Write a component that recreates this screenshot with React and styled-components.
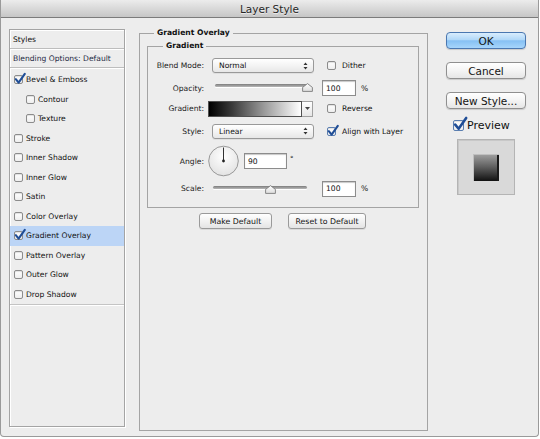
import React from 'react';
import styled, { createGlobalStyle } from 'styled-components';

const Global = createGlobalStyle`
  html, body { margin: 0; padding: 0; background: #ffffff; }
  body { font-family: "DejaVu Sans", "Liberation Sans", sans-serif; color: #111111; }
  * { box-sizing: border-box; }
`;

const Window = styled.div`
  width: 539px;
  height: 437px;
  background: #ededed;
  border: 1px solid #9a9a9a;
  border-top: none;
  border-radius: 0 0 4px 4px;
  display: flex;
  flex-direction: column;
`;

const TitleBar = styled.div`
  height: 18px;
  flex: none;
  background: linear-gradient(#ececec, #d9d9d9 50%, #c6c6c6);
  border-bottom: 1px solid #7b7b7b;
  display: flex;
  align-items: center;
  justify-content: center;
  font-size: 10.5px;
  color: #262626;
  text-shadow: 0 1px 0 rgba(255, 255, 255, 0.6);
`;

const Body = styled.div`
  display: flex;
  align-items: flex-start;
  padding-left: 8px;
`;

/* ---------- left list ---------- */
const StyleList = styled.div`
  margin-top: 11px;
  width: 116px;
  height: 398px;
  border: 1px solid #a4a4a4;
  box-shadow: inset 1px 1px 0 #ffffff, 1px 1px 0 #ffffff;
  display: flex;
  flex-direction: column;
`;

const HeadRow = styled.div`
  height: ${p => p.$h}px;
  flex: none;
  display: flex;
  align-items: center;
  padding-left: 3px;
  font-size: 7.6px;
  color: ${p => p.$c || '#111111'};
  border-bottom: 1px solid #bdbdbd;
  box-shadow: 0 1px 0 #ffffff;
`;

const Items = styled.div`
  padding-top: 2px;
  border-bottom: 1px solid #c4c4c4;
  box-shadow: 0 1px 0 #ffffff;
`;

const Item = styled.div`
  height: 19.5px;
  display: flex;
  align-items: center;
  gap: 3px;
  padding-left: ${p => (p.$indent ? 16 : 4)}px;
  font-size: 7.6px;
  background: ${p => (p.$sel ? '#bcd5f6' : 'transparent')};
`;

/* ---------- checkbox ---------- */
const Box = styled.span`
  position: relative;
  flex: none;
  width: ${p => p.$s}px;
  height: ${p => p.$s}px;
  border: 1px solid ${p => (p.$blue ? '#5a7eb0' : '#8c8c8c')};
  border-radius: 2px;
  background: linear-gradient(#ffffff, #eeeeee);
  box-shadow: inset 0 1px 1px rgba(0, 0, 0, 0.12);
`;

const Tick = styled.svg`
  position: absolute;
  left: ${p => p.$l}px;
  top: ${p => p.$t}px;
  overflow: visible;
`;

function Check({ checked, size = 9, blue }) {
  const k = size / 9;
  return (
    <Box $s={size} $blue={blue}>
      {checked && (
        <Tick $l={-1 * k} $t={-3 * k} width={12 * k} height={12 * k} viewBox="0 0 12 12">
          <path d="M1.8 6.2 L4.6 9.6 L10.8 0.8" fill="none" stroke="#1f4d96" strokeWidth="2.1" strokeLinecap="round" strokeLinejoin="round" />
        </Tick>
      )}
    </Box>
  );
}

/* ---------- middle ---------- */
const Field = styled.fieldset`
  margin: ${p => p.$m};
  padding: 0;
  min-inline-size: 0;
  border: 1px solid #a4a4a4;
  width: ${p => p.$w}px;
  height: ${p => p.$h}px;
  flex: none;
`;

const Legend = styled.legend`
  margin-left: ${p => p.$ml}px;
  padding: 0 3px;
  font-weight: bold;
  font-size: 7.6px;
  line-height: 10px;
  color: #111111;
`;

const Rows = styled.div`
  padding-top: 6px;
  display: flex;
  flex-direction: column;
`;

const Row = styled.div`
  display: grid;
  grid-template-columns: 56px 118px auto;
  align-items: center;
  height: ${p => p.$h}px;
  margin-top: ${p => p.$mt || 0}px;
`;

const Label = styled.span`
  text-align: right;
  font-size: 7.6px;
  color: #1a1a1a;
`;

const Cell = styled.div`
  display: flex;
  align-items: center;
  height: 100%;
  padding-left: ${p => p.$pl || 0}px;
`;

const Side = styled.div`
  display: flex;
  align-items: center;
  gap: ${p => p.$gap || 6}px;
  padding-left: ${p => p.$pl || 0}px;
  font-size: 7.6px;
`;

const Select = styled.div`
  width: 102px;
  height: 15px;
  border: 1px solid #999999;
  border-radius: 3px;
  background: linear-gradient(#ffffff, #f4f4f4 50%, #e7e7e7);
  box-shadow: 0 1px 0 rgba(0, 0, 0, 0.06);
  display: flex;
  align-items: center;
  justify-content: space-between;
  padding: 0 5px 0 6px;
  font-size: 7.6px;
`;

const Input = styled.input`
  width: ${p => p.$w}px;
  height: 16px;
  border: 1px solid #8c8c8c;
  box-shadow: inset 0 1px 1px rgba(0, 0, 0, 0.22);
  background: #ffffff;
  padding: 0 3px;
  font-family: inherit;
  font-size: 7.6px;
  color: #111111;
  outline: none;
`;

const SliderBox = styled.div`
  position: relative;
  align-self: flex-start;
  margin-top: ${p => p.$mt}px;
  width: ${p => p.$w}px;
  height: 11px;
`;

const Track = styled.div`
  height: 3px;
  border-radius: 2px;
  background: linear-gradient(#7c7c7c, #b9b9b9);
  box-shadow: 0 1px 0 #ffffff;
`;

const Thumb = styled.svg`
  position: absolute;
  top: -1px;
  margin-left: -5.5px;
`;

function Slider({ w, mt, pct }) {
  return (
    <SliderBox $w={w} $mt={mt}>
      <Track />
      <Thumb width="11" height="9" viewBox="0 0 11 9" style={{ left: `${pct}%` }}>
        <defs>
          <linearGradient id="tg" x1="0" y1="0" x2="0" y2="1">
            <stop offset="0" stopColor="#ffffff" />
            <stop offset="1" stopColor="#dcdcdc" />
          </linearGradient>
        </defs>
        <path d="M5.5 0.6 L10.4 4.4 L10.4 8.4 L0.6 8.4 L0.6 4.4 Z" fill="url(#tg)" stroke="#7a7a7a" strokeWidth="0.9" />
      </Thumb>
    </SliderBox>
  );
}

const Swatch = styled.div`
  width: 94px;
  height: 16px;
  border: 1px solid #505050;
  background: linear-gradient(90deg, #000000 0%, #3a3a3a 25%, #9a9a9a 60%, #ffffff 100%);
`;

const SwatchDrop = styled.div`
  width: 11px;
  height: 16px;
  border: 1px solid #a0a0a0;
  border-left: none;
  background: linear-gradient(#ffffff, #e6e6e6);
  display: flex;
  align-items: center;
  justify-content: center;
`;

const Degree = styled.span`
  align-self: flex-start;
  margin-top: 10px;
  margin-left: 3px;
  font-size: 7px;
`;

const ButtonsRow = styled.div`
  display: flex;
  justify-content: center;
  gap: 16px;
  margin-top: 5px;
  padding-right: 2px;
`;

const SmallBtn = styled.div`
  width: ${p => p.$w}px;
  height: 16px;
  border: 1px solid #9a9a9a;
  border-radius: 3px;
  background: linear-gradient(#ffffff, #f2f2f2 50%, #e4e4e4);
  box-shadow: 0 1px 0 rgba(0, 0, 0, 0.08);
  display: flex;
  align-items: center;
  justify-content: center;
  font-size: 7.8px;
  color: #111111;
`;

/* ---------- right column ---------- */
const RightCol = styled.div`
  margin-left: 18px;
  margin-top: 14px;
  width: 80px;
  display: flex;
  flex-direction: column;
`;

const Btn = styled.div`
  height: 17px;
  margin-top: ${p => p.$mt || 0}px;
  border-radius: 4px;
  border: 1px solid ${p => (p.$primary ? '#4a77b0' : '#8f8f8f')};
  background: ${p =>
    p.$primary
      ? 'linear-gradient(#d9edfd 0%, #b1d8f8 45%, #86c0f3 52%, #a6d5fb 100%)'
      : 'linear-gradient(#ffffff, #f4f4f4 50%, #e6e6e6)'};
  box-shadow: 0 1px 1px rgba(0, 0, 0, 0.15);
  display: flex;
  align-items: center;
  justify-content: center;
  font-size: 10.5px;
  color: #141414;
`;

const PreviewRow = styled.div`
  margin-top: 9px;
  height: 14px;
  padding-left: 7px;
  display: flex;
  align-items: center;
  gap: 3px;
  font-size: 11px;
`;

const PreviewBox = styled.div`
  margin-top: 7px;
  align-self: center;
  width: 58px;
  height: 56px;
  border: 1px solid #b4b4b4;
  background: #d9d9d9;
  box-shadow: inset 1px 1px 0 #c8c8c8;
  display: flex;
  align-items: center;
  justify-content: center;
`;

const PreviewSquare = styled.div`
  width: 26px;
  height: 27px;
  background: linear-gradient(#a2a2a2, #5c5c5c 50%, #111111);
  box-shadow: inset 1px 1px 0 #c0c0c0, inset -2px 0 0 #1a1a1a;
`;

const listItems = [
  { label: 'Bevel & Emboss', checked: true },
  { label: 'Contour', indent: true },
  { label: 'Texture', indent: true },
  { label: 'Stroke' },
  { label: 'Inner Shadow' },
  { label: 'Inner Glow' },
  { label: 'Satin' },
  { label: 'Color Overlay' },
  { label: 'Gradient Overlay', checked: true, sel: true },
  { label: 'Pattern Overlay' },
  { label: 'Outer Glow' },
  { label: 'Drop Shadow' },
];

const UpDown = () => (
  <svg width="5" height="8" viewBox="0 0 5 8">
    <path d="M2.5 0.5 L4.5 3 L0.5 3 Z M2.5 7.5 L4.5 5 L0.5 5 Z" fill="#333" />
  </svg>
);

const Dial = () => (
  <svg width="31" height="32" viewBox="0 0 31 32">
    <defs>
      <radialGradient id="dg" cx="0.5" cy="0.35" r="0.7">
        <stop offset="0" stopColor="#ffffff" />
        <stop offset="1" stopColor="#e0e0e0" />
      </radialGradient>
    </defs>
    <circle cx="15.5" cy="16" r="14.8" fill="url(#dg)" stroke="#8e8e8e" strokeWidth="0.9" />
    <line x1="15.5" y1="16" x2="15.5" y2="2.5" stroke="#333" strokeWidth="1" />
    <circle cx="15.5" cy="16" r="1.4" fill="#222" />
  </svg>
);

export default function App() {
  return (
    <>
      <Global />
      <Window>
        <TitleBar>Layer Style</TitleBar>
        <Body>
          <StyleList>
            <HeadRow $h={19}>Styles</HeadRow>
            <HeadRow $h={19} $c="#1e2a44">Blending Options: Default</HeadRow>
            <Items>
              {listItems.map(it => (
                <Item key={it.label} $indent={it.indent} $sel={it.sel}>
                  <Check checked={it.checked} />
                  <span>{it.label}</span>
                </Item>
              ))}
            </Items>
          </StyleList>

          <Field $m="10px 0 0 14px" $w={289} $h={403}>
            <Legend $ml={14}>Gradient Overlay</Legend>
            <Field $m="3px 0 0 7px" $w={272} $h={167}>
              <Legend $ml={15}>Gradient</Legend>
              <Rows>
                <Row $h={17}>
                  <Label>Blend Mode:</Label>
                  <Cell $pl={8}>
                    <Select>
                      <span>Normal</span>
                      <UpDown />
                    </Select>
                  </Cell>
                  <Side $pl={5}>
                    <Check />
                    <span>Dither</span>
                  </Side>
                </Row>
                <Row $h={18} $mt={5}>
                  <Label>Opacity:</Label>
                  <Cell $pl={11}>
                    <Slider w={92} mt={5} pct={100} />
                  </Cell>
                  <Side $gap={5}>
                    <Input $w={34} defaultValue="100" readOnly />
                    <span>%</span>
                  </Side>
                </Row>
                <Row $h={17} $mt={3}>
                  <Label>Gradient:</Label>
                  <Cell $pl={4}>
                    <Swatch />
                    <SwatchDrop>
                      <svg width="5" height="3" viewBox="0 0 5 3">
                        <path d="M0 0 L5 0 L2.5 3 Z" fill="#444" />
                      </svg>
                    </SwatchDrop>
                  </Cell>
                  <Side $pl={5}>
                    <Check />
                    <span>Reverse</span>
                  </Side>
                </Row>
                <Row $h={16} $mt={6}>
                  <Label>Style:</Label>
                  <Cell $pl={8}>
                    <Select>
                      <span>Linear</span>
                      <UpDown />
                    </Select>
                  </Cell>
                  <Side $pl={5}>
                    <Check checked blue />
                    <span>Align with Layer</span>
                  </Side>
                </Row>
                <Row $h={32} $mt={6}>
                  <Label>Angle:</Label>
                  <Cell $pl={4}>
                    <Dial />
                    <Input $w={43} defaultValue="90" readOnly style={{ marginLeft: 5 }} />
                    <Degree>°</Degree>
                  </Cell>
                  <span />
                </Row>
                <Row $h={17} $mt={3}>
                  <Label>Scale:</Label>
                  <Cell $pl={9}>
                    <Slider w={94} mt={6} pct={61} />
                  </Cell>
                  <Side $gap={5}>
                    <Input $w={34} defaultValue="100" readOnly />
                    <span>%</span>
                  </Side>
                </Row>
              </Rows>
            </Field>
            <ButtonsRow>
              <SmallBtn $w={73}>Make Default</SmallBtn>
              <SmallBtn $w={78}>Reset to Default</SmallBtn>
            </ButtonsRow>
          </Field>

          <RightCol>
            <Btn $primary>OK</Btn>
            <Btn $mt={13}>Cancel</Btn>
            <Btn $mt={13}>New Style...</Btn>
            <PreviewRow>
              <Check checked size={11} blue />
              <span>Preview</span>
            </PreviewRow>
            <PreviewBox>
              <PreviewSquare />
            </PreviewBox>
          </RightCol>
        </Body>
      </Window>
    </>
  );
}
